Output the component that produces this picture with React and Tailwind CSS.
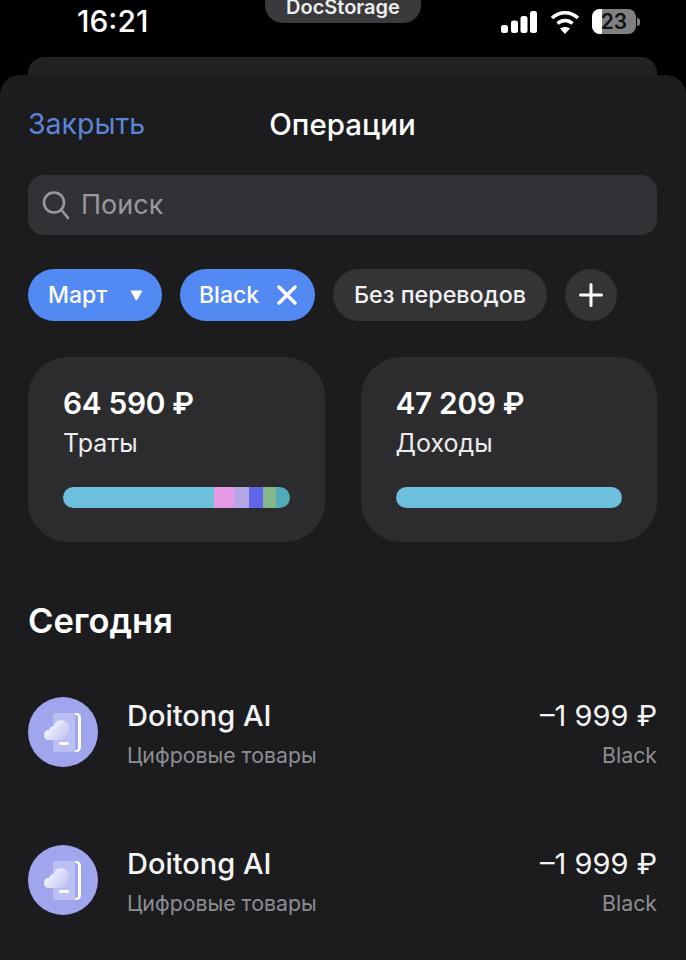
const operations = [
  { id: 1, name: "Doitong AI", category: "Цифровые товары", amount: "–1 999 ₽", card: "Black" },
  { id: 2, name: "Doitong AI", category: "Цифровые товары", amount: "–1 999 ₽", card: "Black" },
];

const segments = [
  { id: "a", cls: "w-[151px] bg-[#6cc0dd]" },
  { id: "b", cls: "w-[20px] bg-[#e39ae2]" },
  { id: "c", cls: "w-[15px] bg-[#b6a6e8]" },
  { id: "d", cls: "w-[14px] bg-[#6065ea]" },
  { id: "e", cls: "w-[13px] bg-[#84b78a]" },
  { id: "f", cls: "flex-1 bg-[#52abb8]" },
];

function StatusIcons() {
  return (
    <div className="flex items-center">
      {/* signal */}
      <svg width="36" height="22" viewBox="0 0 36 22" fill="#fff">
        <rect x="0" y="14" width="7" height="8" rx="2.5" />
        <rect x="10" y="9.5" width="7" height="12.5" rx="2.5" />
        <rect x="19.5" y="5" width="7" height="17" rx="2.5" />
        <rect x="29" y="0" width="7" height="22" rx="2.5" />
      </svg>
      {/* wifi */}
      <svg className="ml-[13px]" width="30" height="24" viewBox="0 0 30 24" fill="none" stroke="#fff" strokeWidth="3.6">
        <path d="M2 8 C9.5 1 20.5 1 28 8" />
        <path d="M7.5 13.5 C12 9.5 18 9.5 22.5 13.5" />
        <path d="M15 24 L10 18.5 C13 16.5 17 16.5 20 18.5 Z" fill="#fff" stroke="none" />
      </svg>
      {/* battery */}
      <div className="ml-[12px] flex items-center gap-[1px]">
        <div className="relative flex h-[25px] w-[44px] items-center justify-center overflow-hidden rounded-[8px] bg-[#808080]">
          <div className="absolute inset-y-0 left-0 w-[10px] bg-white" />
          <span className="relative text-[21px] font-semibold leading-none text-[#111]">23</span>
        </div>
        <div className="h-[8px] w-[3px] rounded-r-full bg-[#808080]" />
      </div>
    </div>
  );
}

function MerchantIcon({ gid }) {
  return (
    <div className="h-[70px] w-[70px] shrink-0 rounded-full bg-[#a0a5ee]">
      <svg width="70" height="70" viewBox="0 0 70 70">
        <defs>
          <linearGradient id={gid} x1="0" y1="0" x2="1" y2="0.6">
            <stop offset="0" stopColor="#ffffff" />
            <stop offset="1" stopColor="#c6c9f6" />
          </linearGradient>
        </defs>
        <path d="M27 16 H47 V55 H27 Q25 55 25 53 V18 Q25 16 27 16 Z" fill="#bcbff4" />
        <path d="M47 16 H48 Q53 16 53 21 V50 Q53 55 48 55 H47 V53 H48 Q50 53 50 50 V21 Q50 18 48 18 H47 Z" fill="#fff" />
        <rect x="31" y="45" width="10" height="3" rx="1.5" fill="#fff" />
        <path d="M21 43 Q16 43 16 38 Q16 33 21 33 Q22 29 26 29 Q27 23 34 23 Q41 24 41 31 Q41 36 38 38 Q38 43 32 43 Z" fill={`url(#${gid})`} />
      </svg>
    </div>
  );
}

function SummaryCard({ amount, label, parts }) {
  return (
    <div className="flex h-[185px] flex-col rounded-[40px] bg-[#2c2c2e] px-[35px] pt-[29px]">
      <div className="text-[29.8px] font-semibold leading-[34px] tracking-[-0.3px] text-white">{amount}</div>
      <div className="mt-[7px] text-[25px] leading-[32px] text-[#ececee]">{label}</div>
      <div className="mt-[28px] flex h-[21px] overflow-hidden rounded-full">
        {parts.map((s) => (
          <div key={s.id} className={s.cls} />
        ))}
      </div>
    </div>
  );
}

export default function App() {
  return (
    <div className="flex h-[960px] w-[686px] flex-col overflow-hidden bg-black font-['Inter','Noto_Sans',sans-serif]">
      {/* Status bar */}
      <div className="flex h-[57px] shrink-0 items-start">
        <div className="w-[265px] pl-[77px] pt-[3px] text-[30px] font-medium leading-[36px] text-white">16:21</div>
        <div className="flex h-[23px] w-[156px] items-end justify-center overflow-hidden rounded-b-[18px] bg-[#3a3a3c] pb-[3px]">
          <span className="text-[20px] font-semibold leading-[26px] text-[#ececee]">DocStorage</span>
        </div>
        <div className="flex flex-1 justify-start pl-[80px] pt-[9px]">
          <StatusIcons />
        </div>
      </div>

      {/* Sheet behind */}
      <div className="ml-7 mr-[29px] h-[18px] shrink-0 rounded-t-[16px] bg-[#222224]" />

      {/* Main sheet */}
      <div className="flex flex-1 flex-col rounded-t-[20px] bg-[#1c1c1e] pl-7 pr-[29px]">
        <div className="relative flex h-[100px] shrink-0 items-center justify-center pb-[2px]">
          <span className="absolute left-0 text-[28.5px] leading-[34px] text-[#5b86d8]">Закрыть</span>
          <span className="text-[29.5px] font-medium leading-[34px] text-white">Операции</span>
        </div>

        <div className="flex h-[60px] items-center gap-[11px] rounded-[16px] bg-[#323236] pl-[14px]">
          <svg width="28" height="30" viewBox="0 0 28 30" fill="none" stroke="#98989e" strokeWidth="2.6" strokeLinecap="round">
            <circle cx="12" cy="12.5" r="10" />
            <path d="M19.5 20 L26 28" />
          </svg>
          <span className="text-[27px] leading-[34px] text-[#98989e]">Поиск</span>
        </div>

        <div className="mt-[34px] flex h-[52px] gap-[18px]">
          <div className="flex w-[134px] items-center rounded-full bg-[#5389f2] pl-5">
            <span className="text-[23px] font-medium text-white">Март</span>
            <svg className="ml-[23px]" width="13" height="11" viewBox="0 0 14 12" fill="#fff">
              <path d="M1 1.5 Q0.5 0.5 1.5 0.5 H12.5 Q13.5 0.5 13 1.5 L8 10.5 Q7 12 6 10.5 Z" />
            </svg>
          </div>
          <div className="flex w-[135px] items-center rounded-full bg-[#5389f2] pl-[19px]">
            <span className="text-[23px] font-medium text-white">Black</span>
            <svg className="ml-[18px]" width="20" height="20" viewBox="0 0 20 20" stroke="#fff" strokeWidth="3.4" strokeLinecap="round">
              <path d="M2 2 L18 18 M18 2 L2 18" />
            </svg>
          </div>
          <div className="flex w-[214px] items-center justify-center rounded-full bg-[#343436]">
            <span className="text-[23.3px] font-medium text-[#f2f2f4]">Без переводов</span>
          </div>
          <div className="flex w-[52px] items-center justify-center rounded-full bg-[#343436]">
            <svg width="24" height="24" viewBox="0 0 24 24" stroke="#fff" strokeWidth="3" strokeLinecap="round">
              <path d="M12 1.5 V22.5 M1.5 12 H22.5" />
            </svg>
          </div>
        </div>

        <div className="mt-9 grid grid-cols-2 gap-9">
          <SummaryCard amount="64 590 ₽" label="Траты" parts={segments} />
          <SummaryCard amount="47 209 ₽" label="Доходы" parts={[{ id: "a", cls: "flex-1 bg-[#6cc0dd]" }]} />
        </div>

        <h2 className="mt-[57px] text-[34.5px] font-semibold leading-[44px] text-white">Сегодня</h2>

        <div className="mt-[54px] flex flex-col gap-[78px]">
          {operations.map((op) => (
            <div key={op.id} className="flex items-center">
              <MerchantIcon gid={`cloud-${op.id}`} />
              <div className="ml-[29px] flex-1">
                <div className="text-[29px] font-medium leading-[38px] text-[#f4f4f6]">{op.name}</div>
                <div className="mt-[8px] text-[21.3px] leading-[24px] text-[#8d8d93]">{op.category}</div>
              </div>
              <div className="text-right">
                <div className="text-[29px] leading-[38px] text-[#f4f4f6]">{op.amount}</div>
                <div className="mt-[8px] text-[21.3px] leading-[24px] text-[#8d8d93]">{op.card}</div>
              </div>
            </div>
          ))}
        </div>
      </div>
    </div>
  );
}
